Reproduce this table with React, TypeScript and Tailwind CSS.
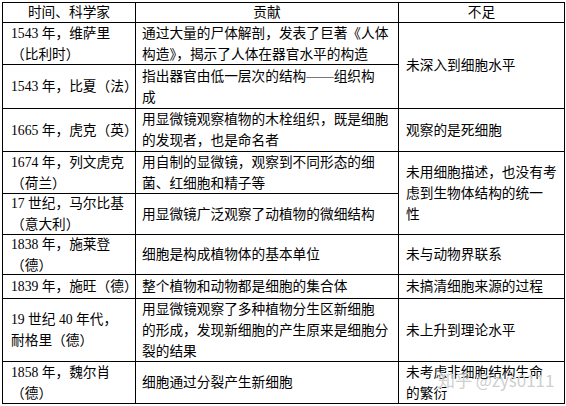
const rows: {
  who: string[];
  what: string[];
  lack?: string[];
  span?: number;
  h: number;
}[] = [
  {
    who: ["1543 年，维萨里", "（比利时）"],
    what: ["通过大量的尸体解剖，发表了巨著《人体", "构造》，揭示了人体在器官水平的构造"],
    lack: ["未深入到细胞水平"],
    span: 2,
    h: 42,
  },
  { who: ["1543 年，比夏（法）"], what: ["指出器官由低一层次的结构——组织构", "成"], h: 44 },
  {
    who: ["1665 年，虎克（英）"],
    what: ["用显微镜观察植物的木栓组织，既是细胞", "的发现者，也是命名者"],
    lack: ["观察的是死细胞"],
    h: 43,
  },
  {
    who: ["1674 年，列文虎克", "（荷兰）"],
    what: ["用自制的显微镜，观察到不同形态的细", "菌、红细胞和精子等"],
    lack: ["未用细胞描述，也没有考", "虑到生物体结构的统一", "性"],
    span: 2,
    h: 42,
  },
  { who: ["17 世纪，马尔比基", "（意大利）"], what: ["用显微镜广泛观察了动植物的微细结构"], h: 41 },
  {
    who: ["1838 年，施莱登", "（德）"],
    what: ["细胞是构成植物体的基本单位"],
    lack: ["未与动物界联系"],
    h: 40,
  },
  {
    who: ["1839 年，施旺（德）"],
    what: ["整个植物和动物都是细胞的集合体"],
    lack: ["未搞清细胞来源的过程"],
    h: 24,
  },
  {
    who: ["19 世纪 40 年代，", "耐格里（德）"],
    what: ["用显微镜观察了多种植物分生区新细胞", "的形成，发现新细胞的产生原来是细胞分", "裂的结果"],
    lack: ["未上升到理论水平"],
    h: 63,
  },
  {
    who: ["1858 年，魏尔肖", "（德）"],
    what: ["细胞通过分裂产生新细胞"],
    lack: ["未考虑非细胞结构生命", "的繁衍"],
    h: 42,
  },
];

// inner box keeps the row at its measured height; longer text spills over the rule like the source
function Lines({ items, h }: { items: string[]; h: number }) {
  return (
    <div className="flex flex-col justify-center" style={{ height: h - 1 }}>
      {items.map((t, i) => (
        <div key={i} className="h-[21px] shrink-0 whitespace-nowrap leading-[21px]">
          {t}
        </div>
      ))}
    </div>
  );
}

export default function App() {
  const cell = "border border-black align-middle p-0";
  return (
    <div
      className="relative h-[406px] w-[566px] overflow-hidden bg-white pl-[2px] pt-[2px] text-[13.7px] text-black"
      style={{ fontFamily: '"Liberation Serif", "Noto Sans CJK SC", serif' }}
    >
      <table className="w-[562px] table-fixed border-collapse">
        <colgroup>
          <col className="w-[133px]" />
          <col className="w-[263px]" />
          <col className="w-[166px]" />
        </colgroup>
        <thead>
          <tr>
            <th className={`${cell} text-center font-normal`}>
              <div className="h-[19px] leading-[19px]">时间、科学家</div>
            </th>
            <th className={`${cell} text-center font-normal`}>
              <div className="h-[19px] leading-[19px]">贡献</div>
            </th>
            <th className={`${cell} text-center font-normal`}>
              <div className="h-[19px] leading-[19px]">不足</div>
            </th>
          </tr>
        </thead>
        <tbody>
          {rows.map((r, i) => {
            const lackH = r.span ? rows.slice(i, i + r.span).reduce((s, x) => s + x.h, 0) : r.h;
            return (
              <tr key={i}>
                <td className={`${cell} pl-[8px]`}>
                  <Lines items={r.who} h={r.h} />
                </td>
                <td className={`${cell} pl-[6px]`}>
                  <Lines items={r.what} h={r.h} />
                </td>
                {r.lack && (
                  <td className={`${cell} pl-[7px]`} rowSpan={r.span ?? 1}>
                    <Lines items={r.lack} h={lackH} />
                  </td>
                )}
              </tr>
            );
          })}
        </tbody>
      </table>
      <div
        className="pointer-events-none absolute left-[438px] top-[371px] whitespace-nowrap text-[17px] leading-none text-[#cfcfcf]"
        style={{ fontFamily: '"Noto Sans CJK SC", sans-serif' }}
      >
        知乎 @zys0111
      </div>
    </div>
  );
}
